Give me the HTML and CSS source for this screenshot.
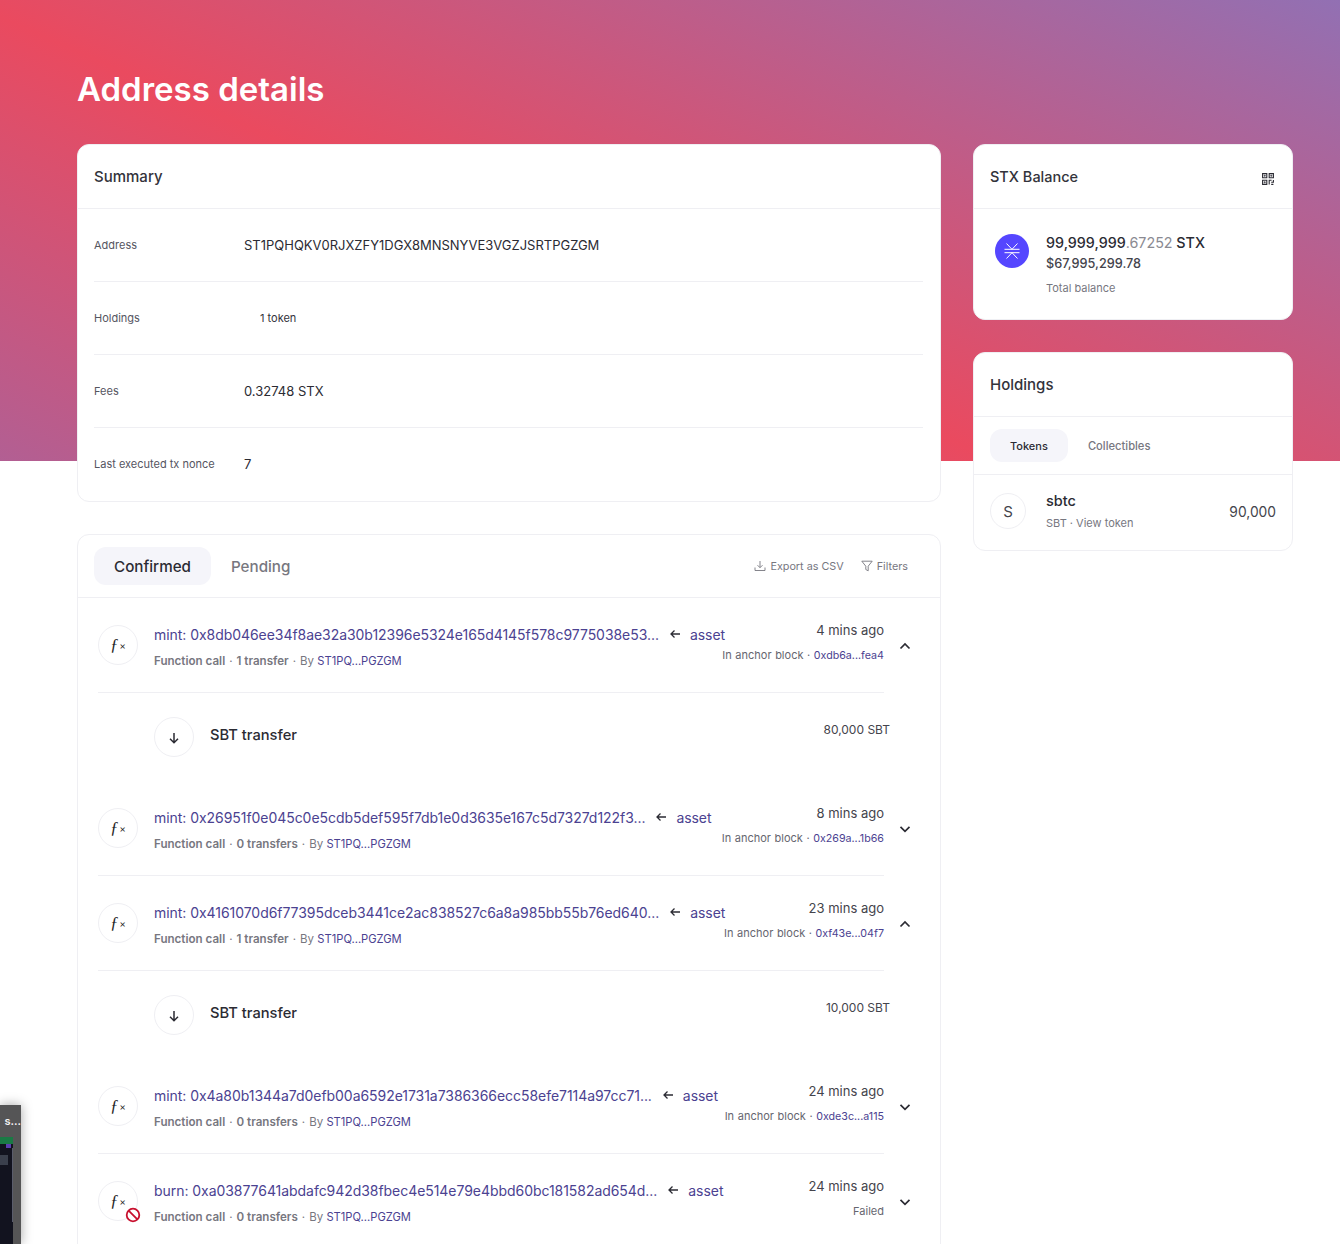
FILE: index.html
```html
<!DOCTYPE html>
<html lang="en">
<head>
    <meta charset="UTF-8">
    <meta name="viewport" content="width=device-width, initial-scale=1.0">
    <title>Address details</title>
    <link rel="stylesheet" href="styles.css">
</head>
<body>
    <svg class="defs" width="0" height="0">
        <symbol id="arrow-down" viewBox="0 0 14 14"><path d="M7 2v9.5M3 7.8l4 4 4-4" fill="none" stroke="currentColor" stroke-width="1.5"/></symbol>
        <symbol id="arrow-left" viewBox="0 0 12 12"><path d="M11 6H2M5.5 2.5 2 6l3.500 3.500" fill="none" stroke="currentColor" stroke-width="1.300"/></symbol>
        <symbol id="chevron-up" viewBox="0 0 12 12"><path d="M1.500 8.500 6 4l4.500 4.500" fill="none" stroke="currentColor" stroke-width="1.700"/></symbol>
        <symbol id="chevron-down" viewBox="0 0 12 12"><path d="M1.500 3.800 6 8.300l4.500-4.500" fill="none" stroke="currentColor" stroke-width="1.700"/></symbol>
    </svg>

    <div class="hero"></div>

    <main class="page">
        <h1>Address details</h1>
        <div class="columns">
            <div class="col-main">
                <section class="card">
                    <h2 class="card-title">Summary</h2>
                    <div class="summary">
                        <div class="summary-row">
                            <span class="summary-label">Address</span>
                            <span class="summary-value">ST1PQHQKV0RJXZFY1DGX8MNSNYVE3VGZJSRTPGZGM</span>
                        </div>
                        <div class="summary-row">
                            <span class="summary-label">Holdings</span>
                            <span class="summary-small">1 token</span>
                        </div>
                        <div class="summary-row">
                            <span class="summary-label">Fees</span>
                            <span class="summary-value">0.32748 STX</span>
                        </div>
                        <div class="summary-row">
                            <span class="summary-label">Last executed tx nonce</span>
                            <span class="summary-value">7</span>
                        </div>
                    </div>
                </section>

                <section class="card tx-card">
                    <div class="tx-head">
                        <div class="tabs">
                            <span class="tab active">Confirmed</span>
                            <span class="tab">Pending</span>
                        </div>
                        <div class="tx-actions">
                            <span class="action">
                                <svg width="12" height="12" viewBox="0 0 12 12" fill="none" stroke="currentColor" stroke-width="0.9"><path d="M6 1v6.500M3.500 5.200 6 7.700l2.500-2.500M1 7.500v3h10v-3"/></svg>
                                Export as CSV
                            </span>
                            <span class="action">
                                <svg width="12" height="12" viewBox="0 0 12 12" fill="none" stroke="currentColor" stroke-width="0.9"><path d="M.8 1.200h10.400L7.200 6.200v4.600L4.800 9.500V6.200z"/></svg>
                                Filters
                            </span>
                        </div>
                    </div>

                    <article class="tx">
                        <div class="tx-main">
                            <div class="round-icon"><span class="fx">ƒ<small>×</small></span></div>
                            <div class="tx-info">
                                <div class="tx-title"><a>mint: 0x8db046ee34f8ae32a30b12396e5324e165d4145f578c9775038e53...</a><svg class="arrow"><use href="#arrow-left"/></svg><a>asset</a></div>
                                <div class="tx-sub"><b>Function call</b><i>·</i><b>1 transfer</b><i>·</i>By <a>ST1PQ...PGZGM</a></div>
                            </div>
                            <div class="tx-meta">
                                <div class="tx-time">4 mins ago</div>
                                <div class="tx-block">In anchor block · <a>0xdb6a...fea4</a></div>
                            </div>
                        </div>
                        <svg class="chevron"><use href="#chevron-up"/></svg>
                    </article>
                    <div class="transfer">
                        <div class="round-icon"><svg class="down"><use href="#arrow-down"/></svg></div>
                        <span class="transfer-name">SBT transfer</span>
                        <span class="transfer-amount">80,000 SBT</span>
                    </div>

                    <article class="tx">
                        <div class="tx-main">
                            <div class="round-icon"><span class="fx">ƒ<small>×</small></span></div>
                            <div class="tx-info">
                                <div class="tx-title"><a>mint: 0x26951f0e045c0e5cdb5def595f7db1e0d3635e167c5d7327d122f3...</a><svg class="arrow"><use href="#arrow-left"/></svg><a>asset</a></div>
                                <div class="tx-sub"><b>Function call</b><i>·</i><b>0 transfers</b><i>·</i>By <a>ST1PQ...PGZGM</a></div>
                            </div>
                            <div class="tx-meta">
                                <div class="tx-time">8 mins ago</div>
                                <div class="tx-block">In anchor block · <a>0x269a...1b66</a></div>
                            </div>
                        </div>
                        <svg class="chevron"><use href="#chevron-down"/></svg>
                    </article>

                    <article class="tx">
                        <div class="tx-main">
                            <div class="round-icon"><span class="fx">ƒ<small>×</small></span></div>
                            <div class="tx-info">
                                <div class="tx-title"><a>mint: 0x4161070d6f77395dceb3441ce2ac838527c6a8a985bb55b76ed640...</a><svg class="arrow"><use href="#arrow-left"/></svg><a>asset</a></div>
                                <div class="tx-sub"><b>Function call</b><i>·</i><b>1 transfer</b><i>·</i>By <a>ST1PQ...PGZGM</a></div>
                            </div>
                            <div class="tx-meta">
                                <div class="tx-time">23 mins ago</div>
                                <div class="tx-block">In anchor block · <a>0xf43e...04f7</a></div>
                            </div>
                        </div>
                        <svg class="chevron"><use href="#chevron-up"/></svg>
                    </article>
                    <div class="transfer">
                        <div class="round-icon"><svg class="down"><use href="#arrow-down"/></svg></div>
                        <span class="transfer-name">SBT transfer</span>
                        <span class="transfer-amount">10,000 SBT</span>
                    </div>

                    <article class="tx">
                        <div class="tx-main">
                            <div class="round-icon"><span class="fx">ƒ<small>×</small></span></div>
                            <div class="tx-info">
                                <div class="tx-title"><a>mint: 0x4a80b1344a7d0efb00a6592e1731a7386366ecc58efe7114a97cc71...</a><svg class="arrow"><use href="#arrow-left"/></svg><a>asset</a></div>
                                <div class="tx-sub"><b>Function call</b><i>·</i><b>0 transfers</b><i>·</i>By <a>ST1PQ...PGZGM</a></div>
                            </div>
                            <div class="tx-meta">
                                <div class="tx-time">24 mins ago</div>
                                <div class="tx-block">In anchor block · <a>0xde3c...a115</a></div>
                            </div>
                        </div>
                        <svg class="chevron"><use href="#chevron-down"/></svg>
                    </article>

                    <article class="tx">
                        <div class="tx-main">
                            <div class="round-icon">
                                <span class="fx">ƒ<small>×</small></span>
                                <svg class="failed" width="16" height="16" viewBox="0 0 16 16" fill="#fff" stroke="#c8102e" stroke-width="1.800"><circle cx="8" cy="8" r="6.300"/><path d="M3.600 3.600l8.800 8.800"/></svg>
                            </div>
                            <div class="tx-info">
                                <div class="tx-title"><a>burn: 0xa03877641abdafc942d38fbec4e514e79e4bbd60bc181582ad654d...</a><svg class="arrow"><use href="#arrow-left"/></svg><a>asset</a></div>
                                <div class="tx-sub"><b>Function call</b><i>·</i><b>0 transfers</b><i>·</i>By <a>ST1PQ...PGZGM</a></div>
                            </div>
                            <div class="tx-meta">
                                <div class="tx-time">24 mins ago</div>
                                <div class="tx-block">Failed</div>
                            </div>
                        </div>
                        <svg class="chevron"><use href="#chevron-down"/></svg>
                    </article>
                </section>
            </div>

            <aside class="col-side">
                <section class="card">
                    <div class="card-title side-title">
                        <h2>STX Balance</h2>
                        <svg class="qr" width="12" height="12" viewBox="0 0 12 12" fill="none" stroke="#2b2b33" stroke-width="1.100"><path d="M.6.600h4.200v4.200H.6zM7.200.600h4.200v4.200H7.200zM.6 7.200h4.200v4.200H.6z"/><path d="M2.200 2.200h1v1h-1zM8.800 2.200h1v1h-1zM2.200 8.800h1v1h-1z" stroke-width=".8"/><path d="M7.200 11.400V7.200h2.400M11.400 7v2.200H9.200M9.200 11.400h2.200"/></svg>
                    </div>
                    <div class="balance">
                        <svg class="stx-logo" width="34" height="34" viewBox="0 0 34 34">
                            <circle cx="17" cy="17" r="17" fill="#5546ff"/>
                            <path d="M9.500 15.300h15M9.500 18.700h15M11.500 9.500l5.500 5.800M22.500 9.500L17 15.300M11.500 24.500l5.500-5.800M22.500 24.500L17 18.700" fill="none" stroke="#fff" stroke-width="1"/>
                        </svg>
                        <div class="balance-info">
                            <div class="balance-amount">99,999,999<span class="muted">.67252</span> STX</div>
                            <div class="balance-usd">$67,995,299.78</div>
                            <div class="balance-note">Total balance</div>
                        </div>
                    </div>
                </section>

                <section class="card">
                    <h2 class="card-title">Holdings</h2>
                    <div class="holdings-tabs">
                        <span class="small-tab active">Tokens</span>
                        <span class="small-tab">Collectibles</span>
                    </div>
                    <div class="token">
                        <div class="token-icon">S</div>
                        <div class="token-info">
                            <div class="token-name">sbtc</div>
                            <div class="token-sub">SBT · View token</div>
                        </div>
                        <div class="token-amount">90,000</div>
                    </div>
                </section>
            </aside>
        </div>
    </main>

    <div class="preview">
        <div class="preview-title">s...</div>
        <div class="preview-shot">
            <div class="shot-green"></div>
            <div class="shot-purple"></div>
            <div class="shot-block"></div>
            <div class="shot-bar"></div>
        </div>
    </div>
</body>
</html>
```

FILE: styles.css
```css
html, body {
    height: 1244px;
    overflow: hidden;
}

body {
    margin: 0;
    position: relative;
    background: #fff;
    color: #2b2b33;
    font-family: Inter, "Noto Sans", sans-serif;
    font-size: 14px;
}

.defs {
    display: none;
}

.hero {
    position: absolute;
    top: 0;
    left: 0;
    right: 0;
    height: 461px;
    background: linear-gradient(24deg, #b25f93 0%, #ea4a5f 42%, #9270b3 100%);
}

.page {
    position: relative;
    padding: 0 47px 0 77px;
}

h1 {
    margin: 0;
    height: 144px;
    box-sizing: border-box;
    padding-top: 65px;
    color: #fff;
    font-size: 33px;
    line-height: 48px;
    font-weight: 600;
}

.columns {
    display: flex;
    gap: 32px;
    align-items: flex-start;
}

.col-main {
    width: 864px;
    display: flex;
    flex-direction: column;
    gap: 32px;
}

.col-side {
    width: 320px;
    display: flex;
    flex-direction: column;
    gap: 32px;
}

.card {
    background: #fff;
    border: 1px solid #efeff3;
    border-radius: 12px;
    box-sizing: border-box;
}

.card-title {
    margin: -1px -1px 0;
    height: 65px;
    box-sizing: border-box;
    padding: 0 17px;
    border-bottom: 1px solid #efeff3;
    color: #33333b;
    font-size: 15px;
    font-weight: 500;
    line-height: 65px;
}

.side-title {
    display: flex;
    justify-content: space-between;
    align-items: center;
    padding-right: 19px;
}

.side-title h2 {
    margin: 0;
    font-size: 14.500px;
    font-weight: 500;
}

.qr {
    margin-top: 5px;
}

/* summary */
.summary {
    padding: 0 17px 0 16px;
}

.summary-row {
    display: flex;
    align-items: center;
    height: 73px;
    border-bottom: 1px solid #efeff3;
    box-sizing: border-box;
}

.summary-row:last-child {
    padding-bottom: 2px;
    border-bottom: none;
}

.summary-label {
    width: 150px;
    font-size: 11px;
    color: #55555f;
}

.summary-value {
    font-size: 13px;
    color: #2b2b33;
}

.summary-small {
    margin-left: 16px;
    font-size: 11px;
    color: #33333b;
}

/* transactions */
.tx-card {
    height: 800px;
}

.tx-head {
    height: 62px;
    display: flex;
    align-items: center;
    justify-content: space-between;
    padding: 0 32px 0 16px;
    border-bottom: 1px solid #efeff3;
}

.tabs {
    display: flex;
    gap: 0;
}

.tab {
    height: 38px;
    line-height: 39px;
    padding: 0 20px;
    border-radius: 12px;
    font-size: 15.200px;
    font-weight: 500;
    color: #77777f;
}

.tab.active {
    background: #f5f5fa;
    color: #2b2b33;
}

.tx-actions {
    display: flex;
    gap: 17px;
}

.action {
    display: flex;
    align-items: center;
    gap: 4px;
    font-size: 10.800px;
    color: #77777f;
}

.tx {
    display: flex;
    padding-left: 20px;
}

.tx-main {
    width: 786px;
    height: 95px;
    box-sizing: border-box;
    display: flex;
    align-items: flex-start;
    padding-top: 27px;
    border-bottom: 1px solid #efeff3;
}

.tx:last-child .tx-main {
    border-bottom: none;
}

.round-icon {
    position: relative;
    flex: none;
    width: 40px;
    height: 40px;
    box-sizing: border-box;
    border: 1px solid #efeff3;
    border-radius: 50%;
    display: flex;
    align-items: center;
    justify-content: center;
}

.fx {
    font-family: "Liberation Serif", serif;
    font-style: italic;
    font-size: 17px;
    color: #1f1f26;
}

.fx small {
    margin-left: 1px;
    font-size: 11px;
    font-style: normal;
    font-weight: 700;
}

.failed {
    position: absolute;
    right: -4px;
    bottom: -3px;
}

.tx-info {
    margin-left: 16px;
    flex: 1;
    min-width: 0;
}

.tx-title {
    display: flex;
    align-items: center;
    height: 20px;
    margin-top: -1px;
    font-size: 14px;
    letter-spacing: -0.05px;
    white-space: nowrap;
}

a {
    color: #4b4291;
}

.arrow {
    flex: none;
    width: 12px;
    height: 12px;
    margin: 0 9px 0 10px;
    color: #2b2b33;
}

.tx-sub {
    margin-top: 9px;
    font-size: 11.500px;
    line-height: 16px;
    color: #77777f;
}

.tx-sub b {
    font-size: 11.600px;
    font-weight: 600;
}

.tx-sub i {
    margin: 0 4px;
    font-style: normal;
}

.tx-sub a {
    font-size: 11.200px;
}

.tx-meta {
    flex: none;
    text-align: right;
    margin-top: -5px;
}

.tx-time {
    font-size: 13px;
    line-height: 20px;
    color: #44444c;
}

.tx-block {
    margin-top: 7px;
    font-size: 11px;
    line-height: 16px;
    word-spacing: 0.5px;
    color: #66666f;
    white-space: nowrap;
}

.tx-block a {
    font-size: 10.700px;
}

.chevron {
    width: 12px;
    height: 12px;
    margin: 42px 0 0 15px;
    color: #2b2b33;
}

.transfer {
    display: flex;
    align-items: flex-start;
    height: 88px;
    box-sizing: border-box;
    padding: 24px 50px 0 76px;
}

.down {
    width: 14px;
    height: 14px;
    margin-top: 2px;
    color: #2b2b33;
}

.transfer-name {
    margin-left: 16px;
    line-height: 36px;
    font-size: 14.700px;
    font-weight: 500;
}

.transfer-amount {
    margin-left: auto;
    line-height: 26px;
    font-size: 12px;
    color: #44444c;
}

/* balance */
.balance {
    display: flex;
    padding: 25px 17px 0 21px;
    height: 110px;
    box-sizing: border-box;
}

.stx-logo {
    flex: none;
}

.balance-info {
    margin-left: 17px;
}

.balance-amount {
    font-size: 14.300px;
    line-height: 20px;
    font-weight: 500;
    margin-top: -1px;
}

.muted {
    color: #8a8a92;
    font-weight: 400;
}

.balance-usd {
    margin-top: 1px;
    font-size: 12.700px;
    line-height: 20px;
    font-weight: 500;
    color: #44444c;
}

.balance-note {
    margin-top: 6px;
    font-size: 11px;
    line-height: 16px;
    color: #77777f;
}

/* holdings */
.holdings-tabs {
    display: flex;
    align-items: center;
    height: 58px;
    box-sizing: border-box;
    padding: 0 16px;
    border-bottom: 1px solid #efeff3;
}

.small-tab {
    height: 33px;
    line-height: 34px;
    padding: 0 20px;
    border-radius: 12px;
    font-size: 11.200px;
    font-weight: 500;
    color: #77777f;
}

.small-tab.active {
    background: #f5f5fa;
    color: #2b2b33;
    font-size: 11px;
}

.token {
    display: flex;
    align-items: center;
    height: 75px;
    padding: 0 16px;
}

.token-icon {
    width: 36px;
    height: 36px;
    margin-top: -3px;
    box-sizing: border-box;
    border: 1px solid #efeff3;
    border-radius: 50%;
    display: flex;
    align-items: center;
    justify-content: center;
    font-size: 15px;
    color: #44444c;
}

.token-info {
    margin: -3px 0 0 20px;
    flex: 1;
}

.token-name {
    font-size: 14.500px;
    font-weight: 500;
    line-height: 20px;
}

.token-sub {
    margin-top: 4px;
    font-size: 11px;
    line-height: 16px;
    color: #77777f;
}

.token-amount {
    margin-top: -1px;
    font-size: 13.800px;
    color: #44444c;
}

/* window preview cut off at the left edge */
.preview {
    position: absolute;
    left: 0;
    bottom: 0;
    width: 21px;
    height: 139px;
    overflow: hidden;
    background: #555556;
    box-shadow: 0 0 12px rgba(0, 0, 0, 0.35);
}

.preview-title {
    margin: 9px 0 0 -8px;
    width: 29px;
    height: 22px;
    text-align: right;
    color: #f2f2f2;
    font-size: 11px;
    line-height: 14px;
    font-weight: 600;
}

.preview-shot {
    position: relative;
    width: 13px;
    height: 107px;
    margin-top: 1px;
    background: #12131f;
}

.shot-green {
    height: 7px;
    background: #1a7a45;
}

.shot-purple {
    width: 5px;
    height: 4px;
    margin-left: 6px;
    background: #5b3fb0;
}

.shot-block {
    width: 8px;
    height: 10px;
    margin-top: 7px;
    background: #3a3f4c;
}

.shot-bar {
    position: absolute;
    top: 11px;
    right: 0;
    width: 1px;
    height: 74px;
    background: #5a5d6c;
}
```
